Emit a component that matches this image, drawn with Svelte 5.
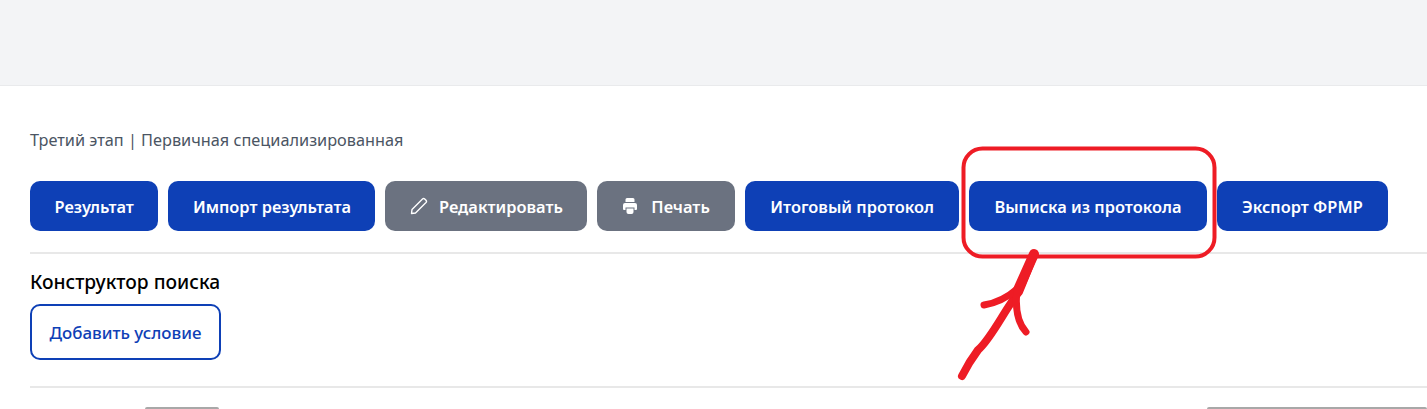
<script>
	const кнопки = [
		{ label: 'Результат', kind: 'primary' },
		{ label: 'Импорт результата', kind: 'primary' },
		{ label: 'Редактировать', kind: 'muted', icon: 'pencil' },
		{ label: 'Печать', kind: 'muted', icon: 'print' },
		{ label: 'Итоговый протокол', kind: 'primary' },
		{ label: 'Выписка из протокола', kind: 'primary' },
		{ label: 'Экспорт ФРМР', kind: 'primary' }
	];
</script>

<div class="page">
	<header class="top"></header>

	<main class="content">
		<p class="stage">Третий этап | Первичная специализированная</p>

		<div class="actions">
			{#each кнопки as b}
				<button class="btn {b.kind}">
					{#if b.icon === 'pencil'}
						<svg class="ico" viewBox="0 0 18 18" fill="none" stroke="currentColor" stroke-width="1.4" stroke-linejoin="round">
							<path d="M1.500 16.500 2 12.500 12.500 2a1.600 1.600 0 0 1 2.200 0l1.300 1.300a1.600 1.600 0 0 1 0 2.200L5.500 16z" />
						</svg>
					{:else if b.icon === 'print'}
						<svg class="ico print" viewBox="0 0 16 16" fill="currentColor">
							<path d="M3.500 1.500A1.500 1.500 0 0 1 5 0h6a1.500 1.500 0 0 1 1.500 1.500V4h-9V1.500z" />
							<path d="M1 7a2 2 0 0 1 2-2h10a2 2 0 0 1 2 2v4a1 1 0 0 1-1 1h-1.500V9.500h-9V12H2a1 1 0 0 1-1-1V7z" />
							<path d="M4.500 10.500h7V14a2 2 0 0 1-2 2h-3a2 2 0 0 1-2-2v-3.500z" />
						</svg>
					{/if}
					{b.label}
				</button>
			{/each}
		</div>

		<hr class="rule" />

		<h2 class="title">Конструктор поиска</h2>
		<button class="btn outline">Добавить условие</button>

		<hr class="rule second" />

		<div class="next">
			<span class="stub left"></span>
			<span class="stub right"></span>
		</div>
	</main>

	<!-- пометка поверх скриншота -->
	<svg class="mark" viewBox="0 0 1427 409" fill="none" stroke="#ee1c25" stroke-linecap="round" stroke-linejoin="round">
		<rect x="963.500" y="148.500" width="251" height="108" rx="19" stroke-width="4" />
		<path d="M1034 254 C1029 268 1024 280 1019 292 C1006 307 992 338 978 350 C972 358 966 368 962 376" stroke-width="8" />
		<path d="M1034 254 L1017 292" stroke-width="10" />
		<path d="M984 305 C996 303 1008 297 1017 289" stroke-width="7" />
		<path d="M1017 290 C1015 308 1017 322 1026 332" stroke-width="7" />
	</svg>
</div>

<style>
	:global(body) {
		margin: 0;
		background: #fff;
	}

	.page {
		position: relative;
		width: 1427px;
		height: 409px;
		overflow: hidden;
		font-family: 'Noto Sans', 'Open Sans', sans-serif;
	}

	.top {
		height: 85px;
		background: #f3f4f6;
		border-bottom: 1px solid #e9eaec;
	}

	.content {
		padding: 44px 0 0 30px;
	}

	.stage {
		margin: 0 0 31px;
		font-size: 16.3px;
		line-height: 20px;
		color: #4b5563;
	}

	.actions {
		display: flex;
		gap: 10px;
	}

	.btn {
		display: flex;
		align-items: center;
		justify-content: center;
		height: 50px;
		padding: 0 25px;
		border: 0;
		border-radius: 10px;
		font-family: inherit;
		font-size: 16.4px;
		font-weight: 600;
		color: #fff;
		white-space: nowrap;
	}

	.actions .btn:nth-child(-n + 3) {
		padding: 0 24.5px;
	}

	.actions .btn:nth-child(5),
	.actions .btn:nth-child(7) {
		padding: 0 25.5px;
	}

	.primary {
		background: #0e40b6;
	}

	.muted {
		background: #6b7280;
	}

	.ico {
		width: 18px;
		height: 18px;
		margin-right: 11px;
	}

	.print {
		width: 16px;
		height: 16px;
		margin-right: 13px;
	}

	.rule {
		width: 1397px;
		height: 2px;
		margin: 21px 0 0;
		border: 0;
		background: #e8e8e8;
	}

	.title {
		margin: 15px 0 10px;
		font-size: 19.200px;
		line-height: 25px;
		font-weight: 500;
		color: #000;
	}

	.outline {
		height: 56px;
		padding: 0 17.500px;
		background: #fff;
		border: 2px solid #0e40b6;
		color: #0e40b6;
		font-size: 16.900px;
		font-weight: 500;
	}

	.second {
		margin-top: 26px;
	}

	.next {
		display: flex;
		margin-top: 19px;
	}

	.stub {
		display: block;
		height: 2px;
		background: #a8a8a8;
		border-radius: 2px 2px 0 0;
	}

	.left {
		width: 74px;
		margin-left: 115px;
	}

	.right {
		width: 220px;
		margin-left: 988px;
	}

	.mark {
		position: absolute;
		inset: 0;
		width: 1427px;
		height: 409px;
		pointer-events: none;
	}
</style>
